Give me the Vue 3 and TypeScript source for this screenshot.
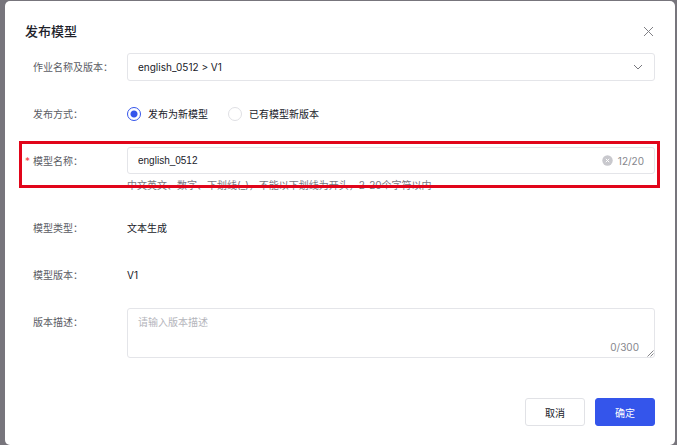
<script setup lang="ts">
import { ref } from 'vue'

const job = ref('english_0512 > V1')
const mode = ref<'new' | 'existing'>('new')
const name = ref('english_0512')
const description = ref('')
</script>

<template>
  <div class="mask">
    <section class="dialog" role="dialog" aria-labelledby="dialog-title">
      <header class="header">
        <h1 id="dialog-title">发布模型</h1>
        <button class="icon-button" type="button" aria-label="关闭">
          <svg width="11" height="11" viewBox="0 0 11 11" fill="none" stroke="#808085" stroke-width="1">
            <path d="M1 1L10 10M10 1L1 10" />
          </svg>
        </button>
      </header>

      <form class="form" @submit.prevent>
        <div class="row">
          <label class="label" for="job">作业名称及版本：</label>
          <div class="control select-box">
            <select id="job" v-model="job">
              <option>english_0512 &gt; V1</option>
            </select>
            <svg class="chevron" width="10" height="6" viewBox="0 0 10 6" fill="none" stroke="#77777d" stroke-width="1">
              <path d="M1 1L5 5L9 1" />
            </svg>
          </div>
        </div>

        <div class="row" role="radiogroup" aria-labelledby="mode-label">
          <span id="mode-label" class="label">发布方式：</span>
          <div class="control radios">
            <label class="radio"><input v-model="mode" type="radio" name="mode" value="new" />发布为新模型</label>
            <label class="radio"><input v-model="mode" type="radio" name="mode" value="existing" />已有模型新版本</label>
          </div>
        </div>

        <div class="row highlighted">
          <label class="label required" for="name">模型名称：</label>
          <div class="control">
            <div class="text-box">
              <input id="name" v-model="name" type="text" maxlength="20" />
              <button class="icon-button" type="button" aria-label="清空" @click="name = ''">
                <svg width="11" height="11" viewBox="0 0 11 11">
                  <circle cx="5.5" cy="5.5" r="5.2" fill="#c8c8cd" />
                  <path d="M3.8 3.8L7.2 7.2M7.2 3.8L3.8 7.2" stroke="#fff" stroke-width="1" />
                </svg>
              </button>
              <span class="count">{{ name.length }}/20</span>
            </div>
            <p class="hint">中文英文、数字、下划线(_)，不能以下划线为开头，2-20个字符以内</p>
          </div>
        </div>

        <div class="row">
          <span class="label">模型类型：</span>
          <span class="control value">文本生成</span>
        </div>

        <div class="row">
          <span class="label">模型版本：</span>
          <span class="control value">V1</span>
        </div>

        <div class="row">
          <label class="label" for="description">版本描述：</label>
          <div class="control area-box">
            <textarea id="description" v-model="description" maxlength="300" placeholder="请输入版本描述"></textarea>
            <span class="count area-count">{{ description.length }}/300</span>
            <svg class="grip" width="7" height="7" viewBox="0 0 7 7" stroke="#66666b" stroke-width="0.8">
              <path d="M0.5 6.5L6.5 0.5M3.5 6.5L6.5 3.5" />
            </svg>
          </div>
        </div>
      </form>

      <footer class="footer">
        <button class="button" type="button">取消</button>
        <button class="button primary" type="button">确定</button>
      </footer>
    </section>
  </div>
</template>

<style>
body {
  margin: 0;
  background: #77757c;
}
</style>

<style scoped>
.mask {
  box-sizing: border-box;
  min-height: 100vh;
  padding: 1px 2px 0 5px;
  display: flex;
  background: #77757c;
  color: #202129;
  font-family: Inter, "Noto Sans CJK SC", sans-serif;
  font-size: 10px;
}

.mask * {
  box-sizing: border-box;
}

.dialog {
  flex: 1;
  min-width: 0;
  padding: 20px 20px 18px;
  border-radius: 5px;
  background: #fff;
}

.header {
  display: flex;
  align-items: center;
  justify-content: space-between;
  height: 20px;
  margin-bottom: 12px;
}

h1 {
  margin: 0;
  font-size: 13px;
  font-weight: 500;
  line-height: 20px;
}

input,
select,
textarea,
button {
  font: inherit;
  color: inherit;
}

.icon-button {
  display: flex;
  padding: 0;
  border: 0;
  background: none;
}

.header .icon-button {
  padding: 1px;
}

.form {
  display: flex;
  flex-direction: column;
  gap: 19px;
}

.row {
  display: flex;
  align-items: flex-start;
  min-height: 28px;
}

.label {
  position: relative;
  flex: 0 0 102px;
  padding-left: 8px;
  color: #5b5c64;
  line-height: 28px;
  white-space: nowrap;
}

.required::before {
  content: "*";
  position: absolute;
  left: 0;
  color: #f53f3f;
}

.control {
  flex: 1;
  min-width: 0;
}

.value {
  line-height: 28px;
}

.select-box {
  position: relative;
}

select {
  display: block;
  width: 100%;
  height: 28px;
  padding: 0 30px 0 10px;
  border: 1px solid #e4e5e9;
  border-radius: 3px;
  background: #fff;
  appearance: none;
}

.chevron {
  position: absolute;
  top: 11px;
  right: 12px;
  pointer-events: none;
}

.radios {
  display: flex;
  gap: 20px;
}

.radio {
  display: flex;
  align-items: center;
  gap: 7px;
  line-height: 28px;
}

.radio input {
  width: 14px;
  height: 14px;
  margin: 0;
  border: 1px solid #dfe0e4;
  border-radius: 50%;
  appearance: none;
}

.radio input:checked {
  border-color: #3455eb;
  background: radial-gradient(circle, #3455eb 3px, #fff 4px);
}

.highlighted {
  position: relative;
}

.highlighted::after {
  content: "";
  position: absolute;
  inset: -6px -5px 7px -6px;
  border: 3px solid #e1051a;
  pointer-events: none;
}

.text-box {
  display: flex;
  align-items: center;
  gap: 5px;
  height: 27px;
  margin-bottom: 1px;
  padding: 0 10px;
  border: 1px solid #e4e5e9;
  border-radius: 3px;
}

.text-box input {
  flex: 1;
  min-width: 0;
  padding: 0;
  border: 0;
  outline: 0;
  background: none;
  font-family: "Liberation Sans", "Noto Sans CJK SC", sans-serif;
}

.count {
  color: #85868d;
}

.hint {
  margin: 0;
  color: #77787f;
  line-height: 20px;
}

.area-box {
  position: relative;
}

textarea {
  display: block;
  width: 100%;
  height: 50px;
  padding: 5px 10px;
  border: 1px solid #e4e5e9;
  border-radius: 3px;
  outline: 0;
  line-height: 16px;
  resize: none;
}

textarea::placeholder {
  color: #b4b5bb;
}

.area-count {
  position: absolute;
  right: 16px;
  bottom: 4px;
  line-height: 14px;
}

.grip {
  position: absolute;
  right: 1px;
  bottom: 1px;
}

.footer {
  display: flex;
  justify-content: flex-end;
  gap: 10px;
  margin-top: 40px;
}

.button {
  width: 60px;
  height: 28px;
  padding: 0;
  border: 1px solid #e1e2e6;
  border-radius: 3px;
  background: #fff;
}

.primary {
  border-color: #3455eb;
  background: #3455eb;
  color: #fff;
}
</style>
